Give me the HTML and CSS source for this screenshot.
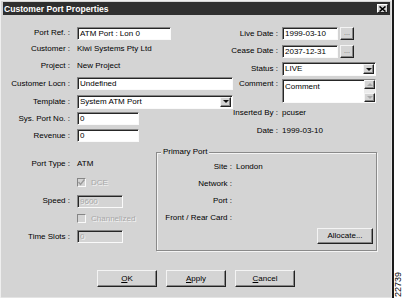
FILE: index.html
```html
<!DOCTYPE html>
<html>
<head>
	<meta charset="utf-8">
	<title>Customer Port Properties</title>
	<link rel="stylesheet" href="styles.css">
</head>
<body>

<div class="page">
	<div class="window">
		<div class="titlebar">
			<span class="title">Customer Port Properties</span>
			<span class="close">
				<svg width="7" height="6" viewBox="0 0 7 6"><path d="M0.5 0.5 L6.5 5.5 M6.5 0.5 L0.5 5.5" stroke="#000" stroke-width="1.6"/></svg>
			</span>
		</div>

		<div class="top">
			<div class="form col-left">
				<span class="lbl">Port Ref. :</span>
				<div class="field w-ref">ATM Port : Lon 0</div>

				<span class="lbl">Customer :</span>
				<span class="val">Kiwi Systems Pty Ltd</span>

				<span class="lbl">Project :</span>
				<span class="val">New Project</span>

				<span class="lbl">Customer Locn :</span>
				<div class="field w-wide">Undefined</div>

				<span class="lbl">Template :</span>
				<div class="field select w-wide">
					<span class="sel-text">System ATM Port</span>
					<span class="drop"><i class="tri"></i></span>
				</div>

				<span class="lbl">Sys. Port No. :</span>
				<div class="field w-num">0</div>

				<span class="lbl">Revenue :</span>
				<div class="field w-num">0</div>
			</div>

			<div class="form col-right">
				<span class="lbl">Live Date :</span>
				<div class="date-row">
					<div class="field w-date">1999-03-10</div>
					<span class="dots">...</span>
				</div>

				<span class="lbl">Cease Date :</span>
				<div class="date-row">
					<div class="field w-date">2037-12-31</div>
					<span class="dots">...</span>
				</div>

				<span class="lbl">Status :</span>
				<div class="field select w-right">
					<span class="sel-text">LIVE</span>
					<span class="drop"><i class="tri"></i></span>
				</div>

				<span class="lbl lbl-top">Comment :</span>
				<div class="field memo w-right">
					<span class="memo-text">Comment</span>
					<span class="scroll">
						<span class="sbtn"><i class="tri up"></i></span>
						<span class="sbtn"><i class="tri off"></i></span>
					</span>
				</div>

				<span class="lbl">Inserted By :</span>
				<span class="val">pcuser</span>

				<span class="lbl">Date :</span>
				<span class="val">1999-03-10</span>
			</div>
		</div>

		<div class="lower">
			<div class="form col-port">
				<span class="lbl">Port Type :</span>
				<span class="val">ATM</span>

				<span></span>
				<span class="check-row">
					<span class="box">
						<svg width="7" height="7" viewBox="0 0 7 7"><path d="M0.5 3 L2.5 5.5 L6.5 0.5" fill="none" stroke="#9a9a9a" stroke-width="1.4"/></svg>
					</span>
					<span class="dim">DCE</span>
				</span>

				<span class="lbl">Speed :</span>
				<div class="field off w-small">9600</div>

				<span></span>
				<span class="check-row">
					<span class="box"></span>
					<span class="dim">Channelized</span>
				</span>

				<span class="lbl">Time Slots :</span>
				<div class="field off w-small">0</div>
			</div>

			<div class="group">
				<span class="group-title">Primary Port</span>
				<div class="form group-grid">
					<span class="lbl">Site :</span>
					<span class="val">London</span>

					<span class="lbl">Network :</span>
					<span class="val"></span>

					<span class="lbl">Port :</span>
					<span class="val"></span>

					<span class="lbl">Front / Rear Card :</span>
					<span class="val"></span>
				</div>
				<div class="alloc-row">
					<span class="btn btn-alloc">Allocate...</span>
				</div>
			</div>
		</div>

		<div class="buttons">
			<span class="btn"><span><u>O</u>K</span></span>
			<span class="btn"><span><u>A</u>pply</span></span>
			<span class="btn"><span><u>C</u>ancel</span></span>
		</div>
	</div>
	<div class="edge"></div>
	<div class="margin"><span class="fig">22739</span></div>
</div>

</body>
</html>
```

FILE: styles.css
```css
*{
	margin: 0;
	padding: 0;
	box-sizing: border-box;
}

body{
	font: 8px/10px "Liberation Sans", Arial, sans-serif;
	color: #000;
	background-color: #fff;
}

.page{
	display: flex;
	width: 402px;
	height: 298px;
}

.window{
	width: 392px;
	height: 298px;
	padding-top: 2px;
	background-color: #d4d4d4;
	box-shadow: inset 1px 1px 0 #efefef, inset -1px -1px 0 #e4e4e4;
}

.edge{
	width: 2px;
	background-color: #1a1a1a;
}

.margin{
	flex: 1;
	display: flex;
	align-items: flex-end;
	justify-content: center;
}

.fig{
	writing-mode: vertical-rl;
	transform: rotate(180deg);
	font-size: 9px;
	line-height: 8px;
	margin-bottom: 1px;
}

/* title bar */
.titlebar{
	display: flex;
	align-items: center;
	justify-content: space-between;
	height: 13px;
	margin: 0 2px 0 3px;
	padding: 0 2px 0 1px;
	background-color: #2f2f2f;
}

.title{
	color: #fff;
	font-weight: bold;
	font-size: 8.6px;
}

.close{
	display: flex;
	align-items: center;
	justify-content: center;
	width: 11px;
	height: 9px;
	background-color: #d4d4d4;
	border: 1px solid;
	border-color: #fff #222 #222 #fff;
}

/* forms */
.form{
	display: grid;
	align-items: center;
	justify-items: start;
}

.lbl{
	justify-self: end;
	white-space: nowrap;
}

.lbl-top{
	align-self: start;
	padding-top: 1px;
}

.val{
	white-space: nowrap;
}

.top{
	display: flex;
	margin-top: 10px;
}

.col-left{
	width: 228px;
	grid-template-columns: 70px auto;
	grid-template-rows: 16px 16px 17px 19px 17px 17px 17px;
	column-gap: 7px;
}

.col-right{
	grid-template-columns: 50px auto;
	grid-template-rows: 17px 18px 18px 26px 18px 18px;
	column-gap: 4px;
}

/* sunken boxes */
.field{
	height: 13px;
	padding: 0 2px;
	line-height: 11px;
	white-space: nowrap;
	overflow: hidden;
	background-color: #fff;
	border: 1px solid;
	border-color: #858585 #fafafa #fafafa #858585;
	box-shadow: inset 1px 1px 0 #262626;
}

.field.off{
	background-color: #d4d4d4;
	color: #a8a8a8;
	text-shadow: 1px 1px 0 #f4f4f4;
}

.w-ref{ width: 94px; }
.w-wide{ width: 156px; }
.w-num{ width: 62px; }
.w-date{ width: 56px; }
.w-right{ width: 94px; }
.w-small{ width: 46px; }

.select{
	display: flex;
	padding-right: 1px;
	height: 14px;
}

.sel-text{
	flex: 1;
	line-height: 12px;
}

.drop, .sbtn, .dots, .btn{
	background-color: #d4d4d4;
	border: 1px solid;
	border-color: #f4f4f4 #222 #222 #f4f4f4;
	box-shadow: inset -1px -1px 0 #868686;
}

.drop{
	display: flex;
	align-items: center;
	justify-content: center;
	width: 11px;
	height: 10px;
	margin-top: 1px;
}

.tri{
	width: 0;
	height: 0;
	border-left: 3px solid transparent;
	border-right: 3px solid transparent;
	border-top: 3px solid #111;
}

.tri.up{
	border-top: 0;
	border-bottom: 3px solid #a8a8a8;
}

.tri.off{
	border-top-color: #a8a8a8;
}

.date-row{
	display: flex;
}

.dots{
	width: 14px;
	height: 13px;
	margin-left: 2px;
	text-align: center;
	line-height: 9px;
	font-size: 7px;
	color: #6a6a6a;
}

.memo{
	display: flex;
	height: 24px;
	padding-right: 0;
}

.memo-text{
	flex: 1;
	padding-top: 1px;
}

.scroll{
	display: flex;
	flex-direction: column;
	justify-content: space-between;
	width: 11px;
	height: 22px;
	background-color: #ececec;
}

.sbtn{
	display: flex;
	align-items: center;
	justify-content: center;
	height: 9px;
}

/* lower part */
.lower{
	display: flex;
	height: 107px;
}

.col-port{
	width: 156px;
	padding-top: 11px;
	grid-template-columns: 70px auto;
	grid-template-rows: 18px 19px 18px 17px 19px;
	column-gap: 7px;
	align-content: start;
}

.check-row{
	display: flex;
	align-items: center;
	gap: 5px;
}

.box{
	display: flex;
	align-items: center;
	justify-content: center;
	width: 9px;
	height: 9px;
	background-color: #d4d4d4;
	border: 1px solid;
	border-color: #858585 #fafafa #fafafa #858585;
}

.dim{
	color: #a8a8a8;
	text-shadow: 1px 1px 0 #f4f4f4;
}

.group{
	position: relative;
	width: 221px;
	height: 99px;
	margin-top: 8px;
	padding: 6px 3px 0 1px;
	border: 1px solid #8a8a8a;
	box-shadow: 1px 1px 0 #f4f4f4, inset 1px 1px 0 #f4f4f4;
}

.group-title{
	position: absolute;
	top: -6px;
	left: 4px;
	padding: 0 2px;
	background-color: #d4d4d4;
}

.group-grid{
	grid-template-columns: 74px auto;
	grid-template-rows: 16px 17px 17px 18px;
	column-gap: 4px;
}

.alloc-row{
	display: flex;
	justify-content: flex-end;
	margin-top: 1px;
}

.btn{
	display: flex;
	align-items: center;
	justify-content: center;
	width: 60px;
	height: 17px;
}

.btn-alloc{
	width: 56px;
	height: 16px;
}

.buttons{
	display: flex;
	justify-content: center;
	gap: 9px;
	margin-top: 19px;
}
```
